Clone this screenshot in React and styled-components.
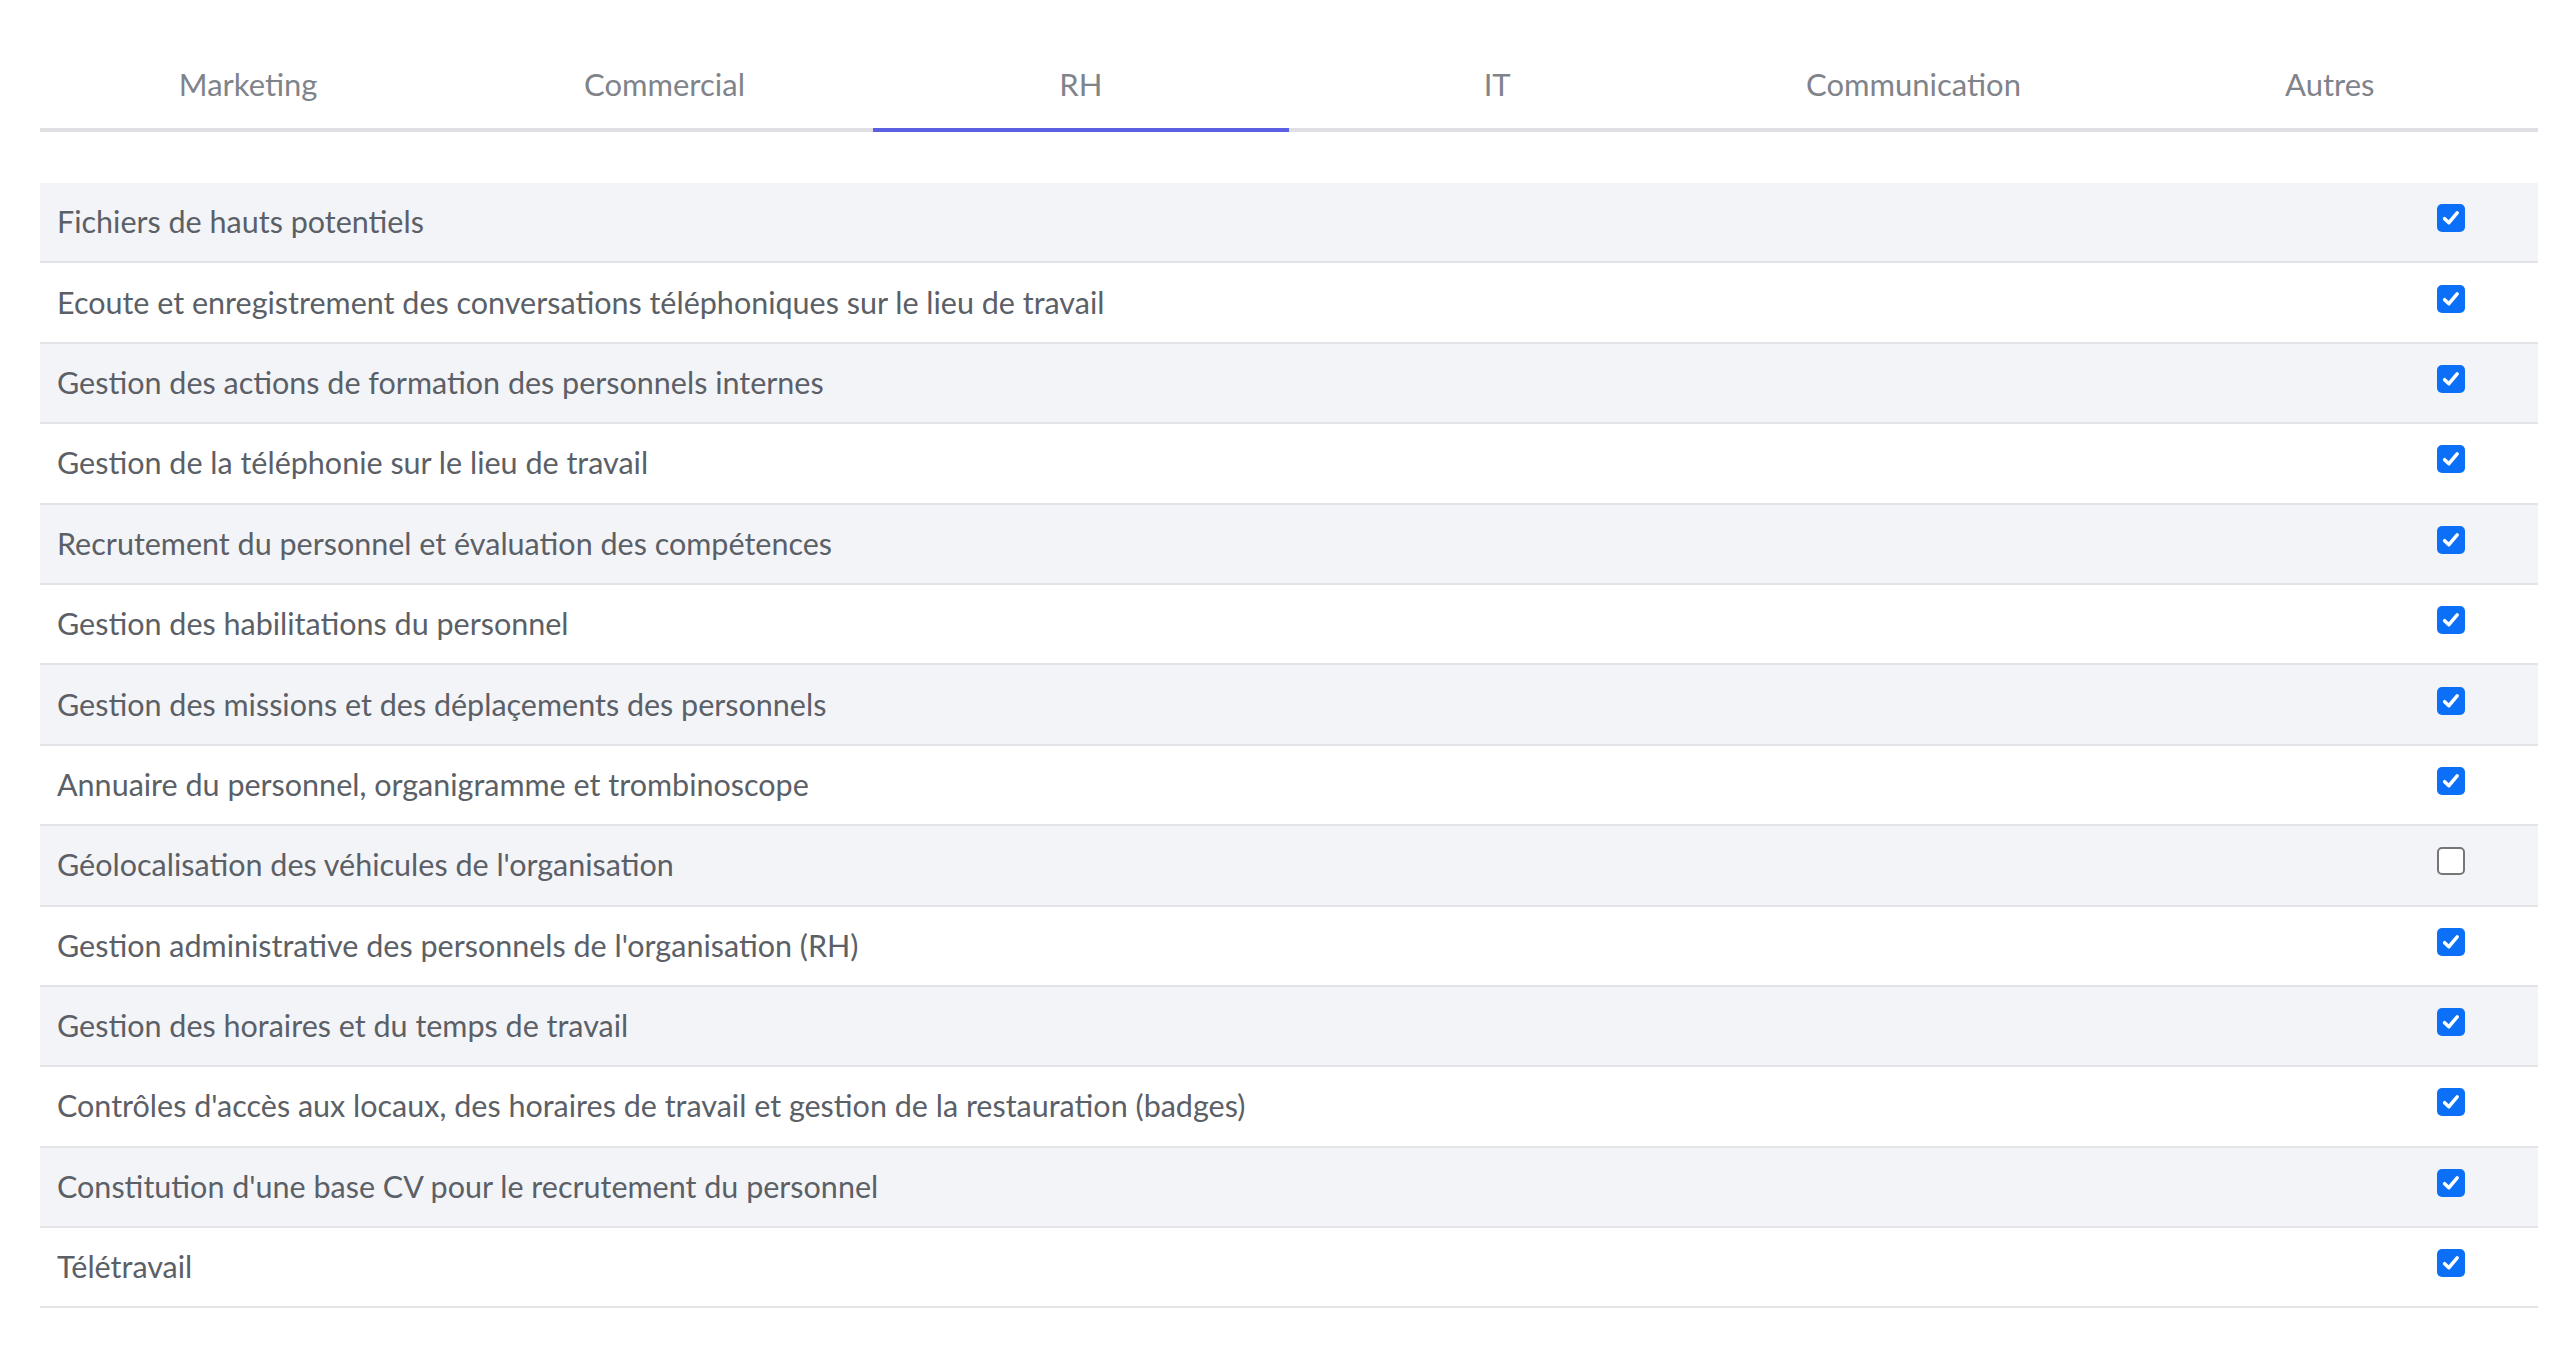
import React from 'react';
import styled, { createGlobalStyle } from 'styled-components';

const tabs = ['Marketing', 'Commercial', 'RH', 'IT', 'Communication', 'Autres'];

const items = [
  { label: 'Fichiers de hauts potentiels', checked: true },
  { label: 'Ecoute et enregistrement des conversations téléphoniques sur le lieu de travail', checked: true },
  { label: 'Gestion des actions de formation des personnels internes', checked: true },
  { label: 'Gestion de la téléphonie sur le lieu de travail', checked: true },
  { label: 'Recrutement du personnel et évaluation des compétences', checked: true },
  { label: 'Gestion des habilitations du personnel', checked: true },
  { label: 'Gestion des missions et des déplaçements des personnels', checked: true },
  { label: 'Annuaire du personnel, organigramme et trombinoscope', checked: true },
  { label: "Géolocalisation des véhicules de l'organisation", checked: false },
  { label: "Gestion administrative des personnels de l'organisation (RH)", checked: true },
  { label: 'Gestion des horaires et du temps de travail', checked: true },
  { label: "Contrôles d'accès aux locaux, des horaires de travail et gestion de la restauration (badges)", checked: true },
  { label: "Constitution d'une base CV pour le recrutement du personnel", checked: true },
  { label: 'Télétravail', checked: true },
];

export default function App() {
  return (
    <>
      <GlobalStyle />
      <Page>
        <TabBar>
          {tabs.map((t) => (
            <Tab key={t} active={t === 'RH'}>
              {t}
            </Tab>
          ))}
        </TabBar>
        <List>
          {items.map((item, i) => (
            <Row key={item.label} striped={i % 2 === 0}>
              <Label>{item.label}</Label>
              <Box checked={item.checked}>
                {item.checked && (
                  <svg width="22" height="22" viewBox="0 0 20 20">
                    <path
                      d="M4.2 10.6 L8.1 14.3 L15.6 5.4"
                      fill="none"
                      stroke="#fff"
                      strokeWidth="3.2"
                      strokeLinecap="round"
                      strokeLinejoin="round"
                    />
                  </svg>
                )}
              </Box>
            </Row>
          ))}
        </List>
      </Page>
    </>
  );
}

const GlobalStyle = createGlobalStyle`
  body {
    margin: 0;
    background: #ffffff;
    font-family: Lato, "Noto Sans", sans-serif;
  }
`;

const Page = styled.div`
  width: 2498px;
  margin-left: 40px;
`;

const TabBar = styled.div`
  display: grid;
  grid-template-columns: repeat(6, 1fr);
  border-bottom: 4px solid #dfe0e4;
  height: 128px;
`;

const Tab = styled.div`
  display: flex;
  align-items: center;
  justify-content: center;
  font-size: 31px;
  color: #7f848b;
  margin-bottom: -4px;
  padding-top: 40px;
  border-bottom: 4px solid ${(p) => (p.active ? '#5b60e3' : 'transparent')};
`;

const List = styled.div`
  margin-top: 51px;
`;

const Row = styled.div`
  display: flex;
  align-items: center;
  justify-content: space-between;
  height: 80.4px;
  box-sizing: border-box;
  padding: 0 73px 2px 17px;
  background: ${(p) => (p.striped ? '#f3f4f8' : '#ffffff')};
  border-bottom: 2px solid #e2e4e8;
`;

const Label = styled.span`
  font-size: 30.5px;
  color: #5b6067;
`;

const Box = styled.span`
  display: flex;
  align-items: center;
  justify-content: center;
  width: 28px;
  height: 28px;
  margin-bottom: 6px;
  box-sizing: border-box;
  border-radius: 5px;
  background: ${(p) => (p.checked ? '#0c6ff7' : '#ffffff')};
  border: ${(p) => (p.checked ? 'none' : '2.5px solid #767676')};
`;
